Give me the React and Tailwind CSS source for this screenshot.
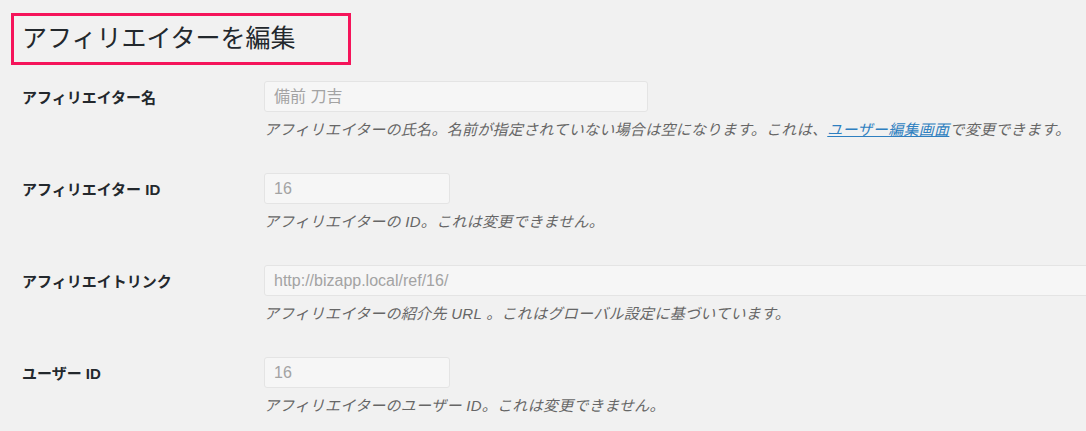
import React from 'react';

const font = { fontFamily: '"Liberation Sans", "Noto Sans CJK JP", sans-serif' };

const fields = [
  {
    label: 'アフィリエイター名',
    value: '備前 刀吉',
    width: 'w-[384px]',
    desc: (
      <>
        アフィリエイターの氏名。名前が指定されていない場合は空になります。これは、
        <a href="#" className="text-[#2e7fc0] underline">
          ユーザー編集画面
        </a>
        で変更できます。
      </>
    ),
  },
  { label: 'アフィリエイター ID', value: '16', width: 'w-[186px]', desc: 'アフィリエイターの ID。これは変更できません。' },
  {
    label: 'アフィリエイトリンク',
    value: 'http://bizapp.local/ref/16/',
    width: 'w-[840px]',
    desc: 'アフィリエイターの紹介先 URL 。これはグローバル設定に基づいています。',
  },
  { label: 'ユーザー ID', value: '16', width: 'w-[186px]', desc: 'アフィリエイターのユーザー ID。これは変更できません。' },
];

const App = () => {
  return (
    <div className="w-full h-[431px] overflow-hidden bg-[#f1f1f1]" style={font}>
      <div className="pt-[13px] pl-[11px]">
        <div className="w-[340px] h-[52px] border-[3px] border-[#f5145a] pl-[8px] pt-[5px]">
          <h1 className="text-[25px] leading-[34px] text-[#23282d] font-normal">アフィリエイターを編集</h1>
        </div>
      </div>
      <div className="flex flex-col pl-[22px] pt-[16px]">
        {fields.map((f, i) => (
          <div key={i} className="flex h-[92px]">
            <div className="w-[242px] shrink-0 h-[31px] pt-[3px] flex items-center text-[15px] font-bold text-[#23282d]">{f.label}</div>
            <div className="flex flex-col shrink-0">
              <div
                className={`${f.width} h-[31px] flex items-center px-[9px] bg-[#f6f6f6] border border-[#e4e4e4] rounded-[3px] text-[16px] text-[#a3a3a3] whitespace-nowrap`}
              >
                {f.value}
              </div>
              <p className="mt-[7px] text-[15px] leading-[22px] italic tracking-[0.3px] text-[#666] whitespace-nowrap">{f.desc}</p>
            </div>
          </div>
        ))}
      </div>
    </div>
  );
};

export default App;
